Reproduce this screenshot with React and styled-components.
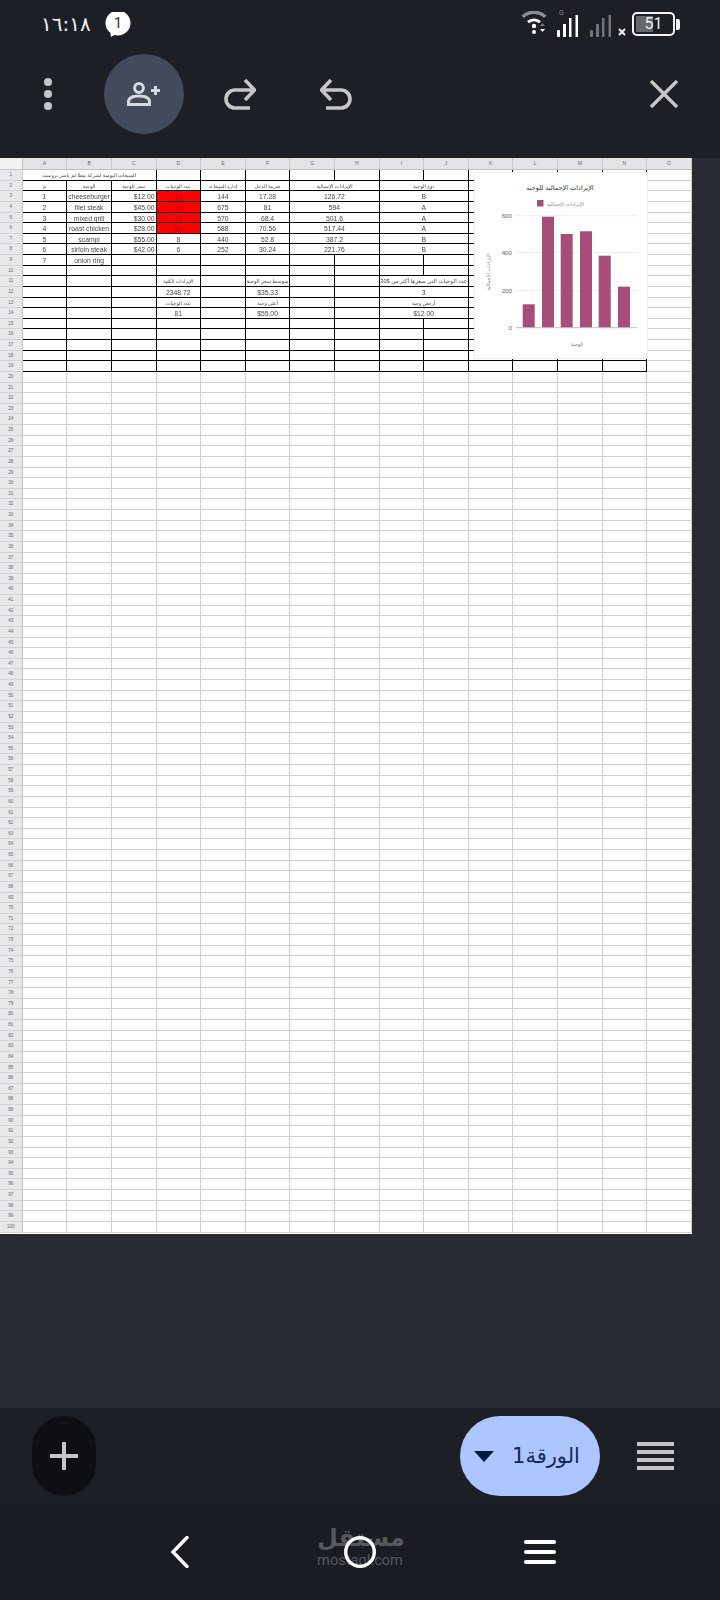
import styled, { createGlobalStyle } from 'styled-components'

const GlobalStyle = createGlobalStyle`
  * {
    margin: 0;
    padding: 0;
    box-sizing: border-box;
  }

  html, body {
    width: 720px;
    height: 1600px;
    overflow: hidden;
    background: #282b33;
    font-family: 'Liberation Sans', 'DejaVu Sans', sans-serif;
  }
`

const Screen = styled.main`
  width: 720px;
  height: 1600px;
  display: flex;
  flex-direction: column;
  background: #282b33;
`

const Header = styled.header`
  height: 158px;
  background: #1c1f26;
  display: flex;
  flex-direction: column;
`

const StatusBar = styled.div`
  height: 54px;
  padding: 0 40px 6px 41px;
  display: flex;
  align-items: center;
`

const Time = styled.span`
  font-family: 'DejaVu Sans', sans-serif;
  font-size: 20px;
  color: #f2f2f2;
  width: 64px;
  letter-spacing: -1.6px;
  white-space: nowrap;
`

const StatusRight = styled.div`
  margin-left: auto;
  height: 28px;
  display: flex;
  align-items: flex-end;
`

const WifiIcon = styled.svg`
  width: 27px;
  height: 24px;
  margin: 0 9px 3px 0;
`

const SignalIcon = styled.svg`
  width: 22px;
  height: 28px;
  margin: 0 11px 1px 0;
`

const NoServiceMark = styled.svg`
  width: 8px;
  height: 8px;
  margin: 0 6px 2px -5px;
`

const Battery = styled.div`
  align-self: center;
  width: 43px;
  height: 24px;
  border: 2px solid #f4f4f4;
  border-radius: 5px;
  background: linear-gradient(to right, #65686d 48%, transparent 48%);
  background-clip: content-box;
  padding: 2px;
  color: #ececec;
  font-size: 16px;
  line-height: 16px;
  text-align: center;
  font-family: 'Roboto', sans-serif;
`

const BatteryNub = styled.div`
  align-self: center;
  width: 4px;
  height: 11px;
  margin-left: 1px;
  background: #f4f4f4;
  border-radius: 0 2px 2px 0;
`

const Toolbar = styled.div`
  height: 80px;
  padding: 0 42px 0 44px;
  display: flex;
  align-items: center;
`

const Dots = styled.div`
  width: 8px;
  display: flex;
  flex-direction: column;
  gap: 4px;
  margin-right: 52px;
`

const Dot = styled.span`
  width: 8px;
  height: 8px;
  border-radius: 50%;
  background: #c4c7c5;
`

const ShareButton = styled.div`
  width: 80px;
  height: 80px;
  border-radius: 50%;
  background: #434a5c;
  display: flex;
  align-items: center;
  justify-content: center;
  margin-right: 40px;
`

const ArrowIcon = styled.svg`
  width: 32px;
  height: 34px;
  margin-right: 64px;
  transform: ${({ $flip }) => ($flip ? 'scaleX(-1)' : 'none')};
`

const CloseIcon = styled.svg`
  margin-left: auto;
  width: 28px;
  height: 28px;
`

const SheetArea = styled.section`
  flex: 1;
`

const Sheet = styled.div`
  position: relative;
  width: 692px;
  height: 1076px;
  background: #fff;
  display: grid;
  grid-template-columns: 22.7px repeat(15, 44.62px);
  grid-template-rows: 12px repeat(100, 10.64px);
`

const Corner = styled.div`
  background: #f1f1f2;
  border-right: 1px solid #c8c8cc;
  border-bottom: 1px solid #c8c8cc;
`

const ColHead = styled.div`
  background: #e3e3e6;
  border-right: 1px solid #c9c9cd;
  border-bottom: 1px solid #c0c0c4;
  color: #6a6a70;
  font-size: 5px;
  line-height: 11px;
  text-align: center;
`

const RowHead = styled.div`
  background: #e8e8ea;
  border-right: 1px solid #c8c8cc;
  border-bottom: 1px solid #d4d4d8;
  color: #66666c;
  font-size: 4.6px;
  line-height: 10px;
  text-align: center;
`

const Cell = styled.div`
  grid-column: span ${({ $span }) => $span || 1};
  background: ${({ $fill }) => $fill || 'transparent'};
  border-right: 1px solid ${({ $table }) => ($table ? '#000' : '#cfcfcf')};
  border-bottom: 1px solid ${({ $table }) => ($table ? '#000' : '#cfcfcf')};
  color: ${({ $fill }) => ($fill ? '#900000' : '#484848')};
  font-size: ${({ $size }) => $size || '6.8px'};
  line-height: 11px;
  white-space: nowrap;
  overflow: visible;
  text-align: ${({ $align }) => $align || 'center'};
  padding: ${({ $align }) => ($align === 'right' ? '0 1px 0 0' : '0')};
`

const CellText = styled.span`
  display: inline-block;
  filter: blur(0.3px);
`

const ChartCard = styled.svg`
  position: absolute;
  left: 475px;
  top: 15px;
  width: 172px;
  height: 185px;
  background: #fff;
  box-shadow: 0 0 0 1px #efeff0;
`

const BottomBar = styled.div`
  height: 96px;
  background: #1c1f26;
  padding: 0 46px 0 32px;
  display: flex;
  align-items: center;
`

const AddSheet = styled.div`
  width: 64px;
  height: 80px;
  border-radius: 32px;
  background: #0d0f13;
  display: flex;
  align-items: center;
  justify-content: center;
`

const SheetPill = styled.div`
  margin-left: auto;
  width: 140px;
  height: 80px;
  border-radius: 40px;
  background: #adc6ff;
  display: flex;
  align-items: center;
  padding-left: 14px;
  gap: 18px;
`

const Caret = styled.span`
  width: 0;
  height: 0;
  border-left: 10px solid transparent;
  border-right: 10px solid transparent;
  border-top: 11px solid #001a41;
`

const PillLabel = styled.span`
  font-family: 'DejaVu Sans', sans-serif;
  font-size: 21px;
  color: #0f2a5c;
`

const SheetsMenu = styled.div`
  margin-left: 37px;
  width: 37px;
  display: flex;
  flex-direction: column;
  gap: 4px;
`

const MenuLine = styled.span`
  height: 4px;
  background: #c4c7c5;
`

const NavBar = styled.nav`
  position: relative;
  height: 96px;
  background: #191c23;
  display: flex;
  align-items: center;
  justify-content: center;
  gap: 148px;
`

const Watermark = styled.div`
  position: absolute;
  left: 317px;
  top: 21px;
  width: 86px;
  text-align: center;
  color: #55585d;
`

const WatermarkArabic = styled.div`
  font-family: 'DejaVu Sans', sans-serif;
  font-weight: bold;
  font-size: 24px;
  line-height: 26px;
`

const WatermarkLatin = styled.div`
  margin-top: 3px;
  font-family: 'Roboto', sans-serif;
  font-size: 14.6px;
  line-height: 13px;
`

const NavIcon = styled.svg`
  position: relative;
  width: 32px;
  height: 32px;
`

const NavMenu = styled.div`
  position: relative;
  width: 32px;
  display: flex;
  flex-direction: column;
  gap: 6px;
`

const NavLine = styled.span`
  height: 4px;
  border-radius: 2px;
  background: #fff;
`

const COLS = 'ABCDEFGHIJKLMNO'.split('')

const AR = '4.9px'

// cells of the table: row -> list of [column, span, text, options]
const TABLE = {
  1: [[0, 3, 'المبيعات اليومية لشركة مطاعم ياسر بروست', { size: '5.1px', ar: true }]],
  2: [
    [0, 1, 'م', { size: AR, ar: true }],
    [1, 1, 'الوجبة', { size: AR, ar: true }],
    [2, 1, 'سعر الوجبة', { size: AR, ar: true }],
    [3, 1, 'عدد الوجبات', { size: AR, ar: true }],
    [4, 1, 'إدارة المبيعات', { size: AR, ar: true }],
    [5, 1, 'ضريبة الدخل', { size: AR, ar: true }],
    [6, 2, 'الإيرادات الإجمالية', { size: AR, ar: true }],
    [8, 2, 'نوع الوجبة', { size: AR, ar: true }],
  ],
  11: [
    [3, 1, 'الإيرادات الكلية', { size: AR, ar: true }],
    [5, 1, 'متوسط سعر الوجبة', { size: '5.2px', ar: true }],
    [8, 2, 'عدد الوجبات التي سعرها أكثر من $30', { size: '5.6px', ar: true }],
  ],
  12: [
    [3, 1, '2348.72'],
    [5, 1, '$35.33'],
    [8, 2, '3'],
  ],
  13: [
    [3, 1, 'عدد الوجبات', { size: AR, ar: true }],
    [5, 1, 'أغلى وجبة', { size: AR, ar: true }],
    [8, 2, 'أرخص وجبة', { size: AR, ar: true }],
  ],
  14: [
    [3, 1, '81'],
    [5, 1, '$55.00'],
    [8, 2, '$12.00'],
  ],
}

const MEALS = [
  ['1', 'cheeseburger', '$12.00', '12', '144', '17.28', '126.72', 'B'],
  ['2', 'filet steak', '$45.00', '15', '675', '81', '594', 'A'],
  ['3', 'mixed grill', '$30.00', '19', '570', '68.4', '501.6', 'A'],
  ['4', 'roast chicken', '$28.00', '21', '588', '70.56', '517.44', 'A'],
  ['5', 'scampi', '$55.00', '8', '440', '52.8', '387.2', 'B'],
  ['6', 'sirloin steak', '$42.00', '6', '252', '30.24', '221.76', 'B'],
]

MEALS.forEach((m, i) => {
  TABLE[i + 3] = [
    [0, 1, m[0]],
    [1, 1, m[1]],
    [2, 1, m[2], { align: 'right' }],
    [3, 1, m[3], { fill: i < 4 ? '#ff0000' : null }],
    [4, 1, m[4]],
    [5, 1, m[5]],
    [6, 2, m[6]],
    [8, 2, m[7]],
  ]
})
TABLE[9] = [
  [0, 1, '7'],
  [1, 1, 'onion ring'],
]

function rowCells(r) {
  const listed = TABLE[r] || []
  const out = []
  let c = 0
  while (c < 15) {
    const hit = listed.find((l) => l[0] === c)
    const span = hit ? hit[1] : 1
    const opts = hit && hit[3] ? hit[3] : {}
    out.push(
      <Cell
        key={c}
        $span={span}
        $table={r <= 19 && c < 14}
        $size={opts.size}
        $align={opts.align}
        $fill={opts.fill}
        dir={opts.ar ? 'rtl' : undefined}
      >
        {hit && <CellText>{hit[2]}</CellText>}
      </Cell>
    )
    c += span
  }
  return out
}

function RowCells({ r }) {
  return <>{rowCells(r)}</>
}

const BARS = [
  [522.7, 304.3],
  [542, 216.7],
  [560.7, 234],
  [580, 231.3],
  [598.7, 255.7],
  [618, 286.7],
]

const TICKS = [
  ['600', 215.7],
  ['400', 252.7],
  ['200', 290.7],
  ['0', 327.7],
]

function Chart() {
  return (
    <ChartCard viewBox="475 173 172 185">
      <text x="560" y="190" fontSize="6.5" fill="#333" textAnchor="middle" direction="rtl" fontFamily="DejaVu Sans">
        الإيرادات الإجمالية للوجبة
      </text>
      <rect x="537" y="200" width="6.5" height="6.5" fill="#a64d79" />
      <text x="584" y="205.5" fontSize="5" fill="#8a8a8a" direction="rtl" fontFamily="DejaVu Sans">
        الإيرادات الإجمالية
      </text>
      {TICKS.map(([label, y]) => (
        <g key={label}>
          <line x1="516" x2="637" y1={y} y2={y} stroke={label === '0' ? '#bdbdbd' : '#ececec'} strokeWidth="1" />
          <text x="512" y={y + 2.2} fontSize="6.2" fill="#666" textAnchor="end" fontFamily="Liberation Sans">
            {label}
          </text>
        </g>
      ))}
      {BARS.map(([x, y]) => (
        <rect key={x} x={x} y={y} width="12" height={327.2 - y} fill="#a64d79" />
      ))}
      <text
        transform="translate(490 272) rotate(-90)"
        fontSize="5"
        fill="#8a8a8a"
        textAnchor="middle"
        direction="rtl"
        fontFamily="DejaVu Sans"
      >
        الإيرادات الإجمالية
      </text>
      <text x="577" y="346" fontSize="4.8" fill="#777" textAnchor="middle" direction="rtl" fontFamily="DejaVu Sans">
        الوجبة
      </text>
    </ChartCard>
  )
}

function Arrow({ flip }) {
  return (
    <ArrowIcon $flip={flip} viewBox="0 0 32 34" fill="none" stroke="#c4c7c5" strokeWidth="3.6">
      <path d="M21 3 L30.5 13 L21 23" />
      <path d="M30 13 H11 A9 9 0 0 0 11 31 H26" />
    </ArrowIcon>
  )
}

function Signal({ color, label }) {
  return (
    <SignalIcon viewBox="0 0 22 28">
      {label && (
        <text x="2" y="6" fontSize="7" fill="#8b8d90" fontFamily="Roboto">
          {label}
        </text>
      )}
      <rect x="0" y="21" width="3" height="7" rx="1" fill={color} />
      <rect x="6" y="15" width="3" height="13" fill={color} />
      <rect x="12" y="9" width="2.5" height="19" fill={color} />
      <rect x="18.5" y="6" width="2.5" height="22" fill={color} />
    </SignalIcon>
  )
}

export default function App() {
  const rows = Array.from({ length: 100 }, (_, i) => i + 1)

  return (
    <Screen>
      <GlobalStyle />
      <Header>
        <StatusBar>
          <Time>١٦:١٨</Time>
          <svg width="26" height="25" viewBox="0 0 26 25">
            <circle cx="13" cy="11" r="12.5" fill="#fff" />
            <path d="M5 18 L6 25 L13 21 Z" fill="#fff" />
            <text x="13" y="16" fontSize="15" fill="#333" textAnchor="middle" fontFamily="Roboto">
              1
            </text>
          </svg>
          <StatusRight>
            <WifiIcon viewBox="0 0 27 24">
              <path d="M0.5 4.5 A18 18 0 0 1 25.5 4.5 L23 7 A14.5 14.5 0 0 0 3 7 Z" fill="#8b8d90" />
              <path d="M6 10 A11 11 0 0 1 20 10 L18 12.3 A8 8 0 0 0 8 12.3 Z" fill="#fff" />
              <circle cx="13" cy="15" r="2.2" fill="#fff" />
              <circle cx="13" cy="21" r="2" fill="#fff" />
              <path d="M19 15 L24 15 L21.5 12 Z" fill="#777" />
              <path d="M19 18 L24 18 L21.5 21 Z" fill="#fff" />
            </WifiIcon>
            <Signal color="#fff" label="G" />
            <Signal color="#717377" />
            <NoServiceMark viewBox="0 0 8 8">
              <path d="M1 1 L7 7 M7 1 L1 7" stroke="#f0f0f0" strokeWidth="2" />
            </NoServiceMark>
            <Battery>51</Battery>
            <BatteryNub />
          </StatusRight>
        </StatusBar>
        <Toolbar>
          <Dots>
            <Dot />
            <Dot />
            <Dot />
          </Dots>
          <ShareButton>
            <svg width="34" height="24" viewBox="0 0 34 24" fill="none" stroke="#d5d8de" strokeWidth="3">
              <circle cx="12" cy="6" r="4.4" />
              <path d="M1.5 22.5 V20 C1.5 15.5 7 14 12 14 C17 14 22.5 15.5 22.5 20 V22.5 Z" />
              <path d="M24 8.5 H33 M28.5 4 V13" />
            </svg>
          </ShareButton>
          <Arrow />
          <Arrow flip />
          <CloseIcon viewBox="0 0 28 28" fill="none" stroke="#c4c7c5" strokeWidth="3.4">
            <path d="M1 1 L27 27 M27 1 L1 27" />
          </CloseIcon>
        </Toolbar>
      </Header>

      <SheetArea>
        <Sheet>
          <Corner />
          {COLS.map((c) => (
            <ColHead key={c}>{c}</ColHead>
          ))}
          {rows.map((r) => [<RowHead key={`h${r}`}>{r}</RowHead>, <RowCells key={r} r={r} />])}
          <Chart />
        </Sheet>
      </SheetArea>

      <BottomBar>
        <AddSheet>
          <svg width="30" height="30" viewBox="0 0 30 30" stroke="#c4c7c5" strokeWidth="4">
            <path d="M1 15 H29 M15 1 V29" />
          </svg>
        </AddSheet>
        <SheetPill>
          <Caret />
          <PillLabel dir="rtl">الورقة1</PillLabel>
        </SheetPill>
        <SheetsMenu>
          <MenuLine />
          <MenuLine />
          <MenuLine />
          <MenuLine />
        </SheetsMenu>
      </BottomBar>

      <NavBar>
        <Watermark>
          <WatermarkArabic>مستقل</WatermarkArabic>
          <WatermarkLatin>mostaql.com</WatermarkLatin>
        </Watermark>
        <NavIcon viewBox="0 0 32 32" fill="none" stroke="#fff" strokeWidth="3.4" strokeLinecap="round">
          <path d="M23 1.5 L9 16 L23 30.5" />
        </NavIcon>
        <NavIcon viewBox="0 0 32 32" fill="none" stroke="#fff" strokeWidth="3.4">
          <circle cx="16" cy="16" r="14.3" />
        </NavIcon>
        <NavMenu>
          <NavLine />
          <NavLine />
          <NavLine />
        </NavMenu>
      </NavBar>
    </Screen>
  )
}
